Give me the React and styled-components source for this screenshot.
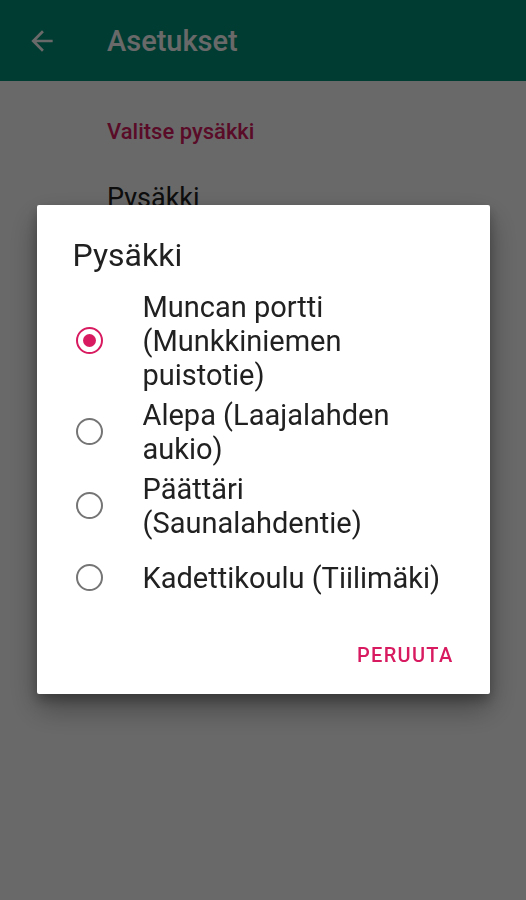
import React, { useState } from "react";
import styled, { createGlobalStyle } from "styled-components";

const stops = [
  "Muncan portti (Munkkiniemen puistotie)",
  "Alepa (Laajalahden aukio)",
  "Päättäri (Saunalahdentie)",
  "Kadettikoulu (Tiilimäki)",
];

function App() {
  const [selected, setSelected] = useState(0);

  return (
    <>
      <GlobalStyle />
      <Page>
        <Toolbar>
          <BackButton>
            <svg width="32" height="32" viewBox="0 0 24 24">
              <path
                d="M20 11H7.83l5.59-5.59L12 4l-8 8 8 8 1.41-1.41L7.83 13H20v-2z"
                fill="#fff"
              />
            </svg>
          </BackButton>
          <ToolbarTitle>Asetukset</ToolbarTitle>
        </Toolbar>

        <PrefList>
          <CategoryTitle>Valitse pysäkki</CategoryTitle>
          <PrefItem>
            <PrefTitle>Pysäkki</PrefTitle>
            <PrefSummary>{stops[selected]}</PrefSummary>
          </PrefItem>
        </PrefList>
      </Page>

      <Scrim>
        <Dialog>
          <DialogTitle>Pysäkki</DialogTitle>
          <Options>
            {stops.map((stop, i) => (
              <Option key={stop} onClick={() => setSelected(i)}>
                <Radio checked={i === selected} />
                <OptionLabel>{stop}</OptionLabel>
              </Option>
            ))}
          </Options>
          <ButtonRow>
            <TextButton>PERUUTA</TextButton>
          </ButtonRow>
        </Dialog>
      </Scrim>
    </>
  );
}

export default App;

const GlobalStyle = createGlobalStyle`
  body {
    margin: 0;
    font-family: Roboto, "Noto Sans", "Liberation Sans", sans-serif;
    background: #ffffff;
  }
`;

const Page = styled.div`
  min-height: 100vh;
  background: #ffffff;
`;

const Toolbar = styled.div`
  display: flex;
  align-items: center;
  height: 81px;
  padding-left: 26px;
  background: #009177;
`;

const BackButton = styled.div`
  display: flex;
  width: 32px;
  height: 32px;
  margin-right: 49px;
`;

const ToolbarTitle = styled.div`
  color: #ffffff;
  font-size: 29px;
  font-weight: 500;
`;

const PrefList = styled.div`
  padding: 37px 0 0 107px;
`;

const CategoryTitle = styled.div`
  color: #d81b60;
  font-size: 22px;
  font-weight: 500;
  line-height: 28px;
`;

const PrefItem = styled.div`
  padding-top: 36px;
`;

const PrefTitle = styled.div`
  color: #212121;
  font-size: 27px;
  line-height: 32px;
`;

const PrefSummary = styled.div`
  color: #757575;
  font-size: 20px;
  line-height: 26px;
`;

const Scrim = styled.div`
  position: fixed;
  inset: 0;
  display: flex;
  align-items: center;
  justify-content: center;
  background: rgba(0, 0, 0, 0.59);
`;

const Dialog = styled.div`
  width: 453px;
  padding-top: 32px;
  margin-top: -2px;
  background: #ffffff;
  border-radius: 2px;
  box-shadow: 0 14px 30px rgba(0, 0, 0, 0.35), 0 6px 12px rgba(0, 0, 0, 0.25);
`;

const DialogTitle = styled.div`
  padding: 0 36px 13px 36px;
  color: #212121;
  font-size: 32px;
  line-height: 37px;
`;

const Options = styled.div`
  display: flex;
  flex-direction: column;
`;

const Option = styled.div`
  display: flex;
  align-items: center;
  min-height: 70px;
  padding: 3px 37px 3px 39px;
  box-sizing: border-box;
  cursor: pointer;
`;

const Radio = styled.span`
  flex: none;
  width: 27px;
  height: 27px;
  box-sizing: border-box;
  border-radius: 50%;
  border: 2.8px solid ${(props) => (props.checked ? "#d81b60" : "#757575")};
  margin-right: 40px;
  display: flex;
  align-items: center;
  justify-content: center;

  &::after {
    content: "";
    width: 13px;
    height: 13px;
    border-radius: 50%;
    background: ${(props) => (props.checked ? "#d81b60" : "transparent")};
  }
`;

const OptionLabel = styled.span`
  color: #212121;
  font-size: 29px;
  line-height: 34px;
`;

const ButtonRow = styled.div`
  display: flex;
  justify-content: flex-end;
  align-items: center;
  height: 81px;
  padding: 4px 36px 0 0;
  box-sizing: border-box;
`;

const TextButton = styled.div`
  color: #d81b60;
  font-size: 20px;
  font-weight: 500;
  letter-spacing: 1.3px;
`;
